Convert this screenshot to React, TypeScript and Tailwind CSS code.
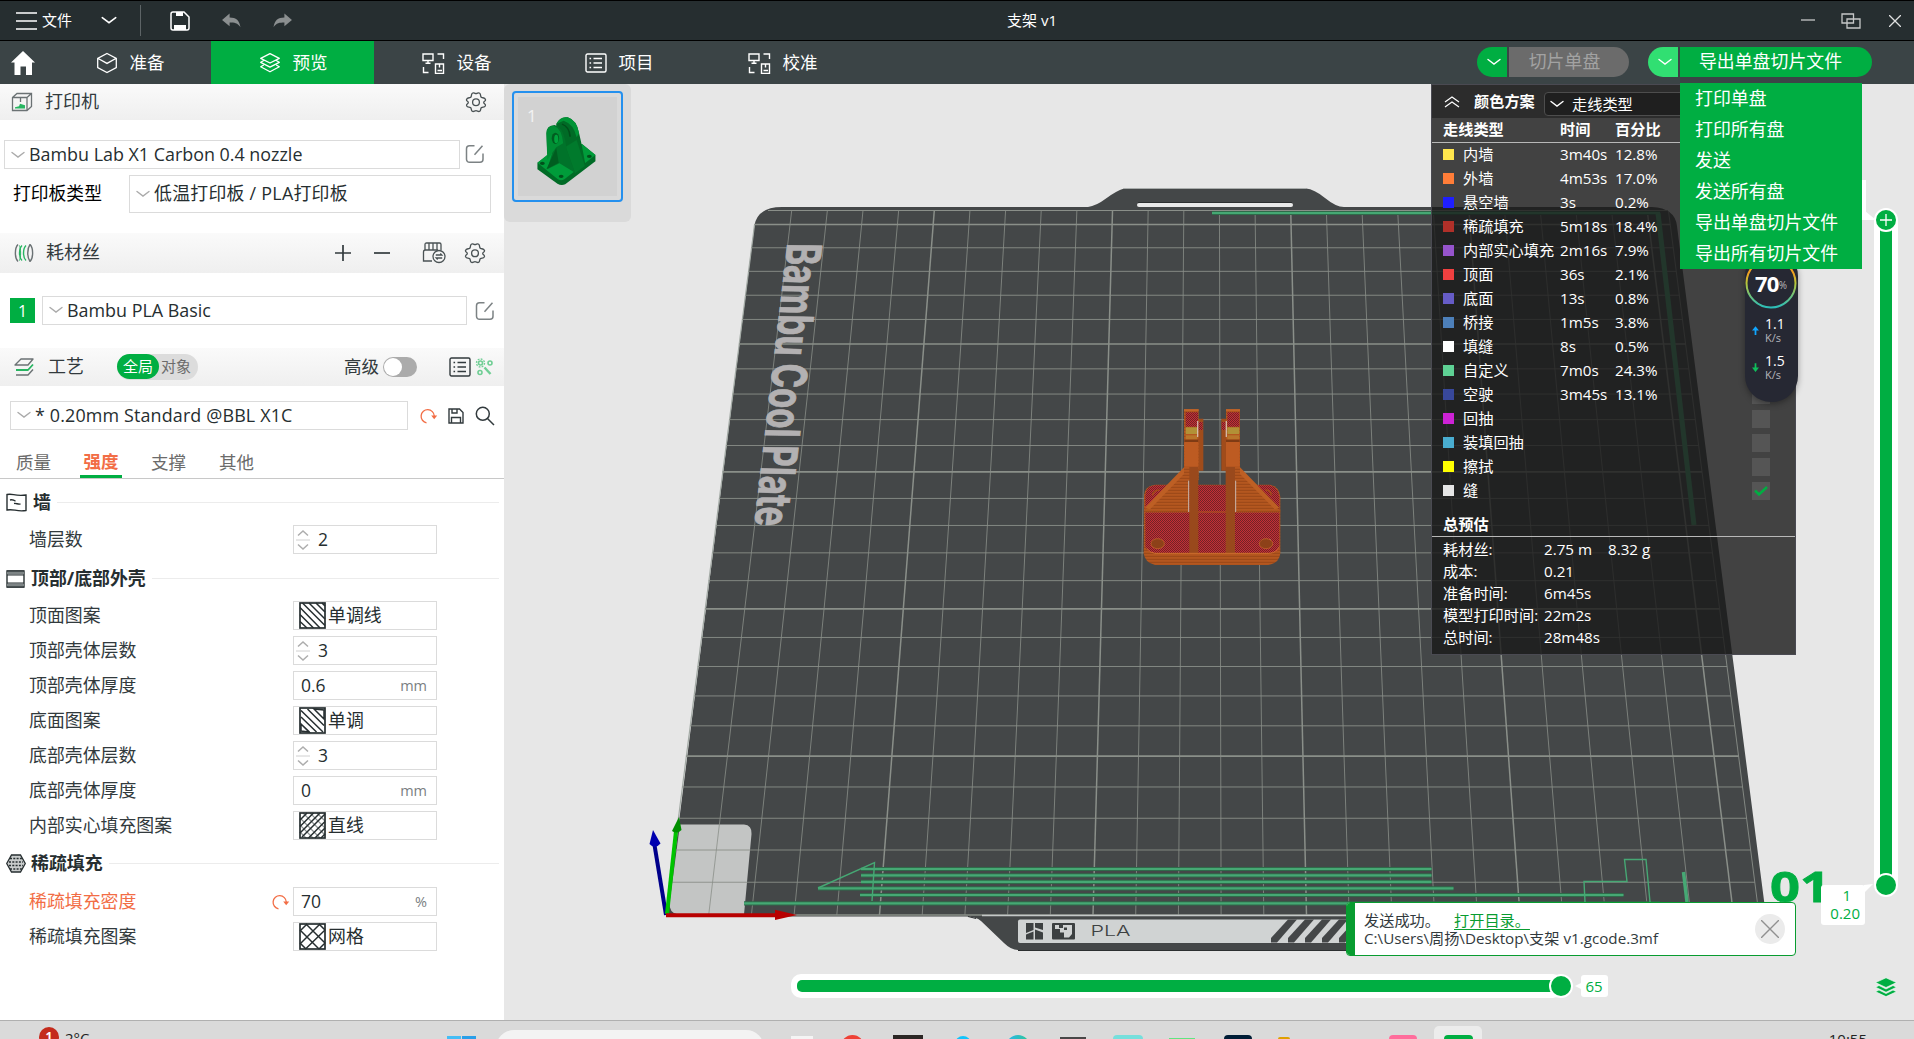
import React from "react";

const FONT = "font-['HarmonyOS_Sans_SC','Open_Sans','Noto_Sans_CJK_SC',sans-serif]";

type IconProps = { className?: string };

/* ---------- small icons ---------- */

function Chevron({ className = "" }: IconProps) {
  return (
    <svg viewBox="0 0 14 8" fill="none" stroke="currentColor" className={className}>
      <path d="M1 1.500 7 6l6-4.500" strokeWidth="1.400" strokeLinecap="round" />
    </svg>
  );
}

function Gear() {
  return (
    <svg viewBox="0 0 22 22" fill="none" stroke="#4a5254" strokeWidth="1.300" className="h-[22px] w-[22px]">
      <path d="M7.200 2.400C8.600 0.800 9.400 2.600 11 2.600s2.400-1.800 3.800-.2c1.400 1.600.2 3 1.700 4 1.700.6 3.300.2 4 2 .5 2-1.800 1.700-1.800 3.100s2.300 1.300 1.700 3.300c-.9 1.800-2.400 1-3.900 1.800-1.300 1-.3 2.400-1.700 3.600-1.600 1-2.300-.6-3.800-.6s-2.200 1.600-3.800.6c-1.400-1.200-.4-2.600-1.700-3.600C4 15.800 2.500 16.600 1.600 14.800c-.6-2 1.700-1.900 1.700-3.300S1 10.400 1.500 8.400c.7-1.800 2.300-1.400 4-2 1.500-1 .3-2.400 1.700-4Z" />
      <circle cx="11" cy="11.300" r="3.400" />
    </svg>
  );
}

function EditIcon() {
  return (
    <svg viewBox="0 0 20 20" fill="none" stroke="#7c8284" strokeWidth="1.500" className="h-5 w-5">
      <path d="M9.500 1.800H4.500a3 3 0 0 0-3 3v10.500a3 3 0 0 0 3 3h10.500a3 3 0 0 0 3-3V9.500" />
      <path d="M9.500 10.700 17.500 1.800" />
    </svg>
  );
}

function ListIcon({ stroke = "#fff" }: { stroke?: string }) {
  return (
    <svg viewBox="0 0 22 20" fill="none" stroke={stroke} strokeWidth="1.400" className="h-5 w-[22px]">
      <rect x="1" y="1" width="20" height="18" rx="1.500" />
      <path d="M8.500 5.500h8.500M8.500 10h8.500M8.500 14.500h8.500M4.500 5.500h1.600M4.500 10h1.600M4.500 14.500h1.600" />
    </svg>
  );
}

function DeviceIcon() {
  return (
    <svg viewBox="0 0 24 22" fill="none" stroke="#fff" strokeWidth="1.400" className="h-[22px] w-6">
      <path d="M2 2h10v6.500H2ZM7 8.500v2.500M4.500 11.200h5M16.500 2h6v5M2.500 15v5.500h5M14.500 12h8v9.500h-8ZM18.500 12v3.500M16.500 18.500h4.500" />
    </svg>
  );
}

function CubeIcon() {
  return (
    <svg viewBox="0 0 22 22" fill="none" stroke="#fff" strokeWidth="1.300" className="h-[22px] w-[22px]">
      <path d="M11 1.500 20.300 6.300v9.400L11 20.500 1.700 15.700V6.300ZM1.700 6.300 11 11.400l9.300-5.100" />
    </svg>
  );
}

function LayersIcon() {
  return (
    <svg viewBox="0 0 22 22" fill="none" stroke="#fff" strokeWidth="1.300" strokeLinejoin="round" className="h-[22px] w-[22px]">
      <path d="M11 1.700 20.300 6.300 11 11 1.700 6.300ZM4.800 8.500 1.700 10.300 11 15.200l9.300-4.900-3.100-1.800M4.800 13 1.700 14.800 11 19.800l9.300-5-3.100-1.800" />
    </svg>
  );
}

function UndoIcon({ className = "" }: IconProps) {
  return (
    <svg viewBox="0 0 22 18" className={className}>
      <path d="M9 1.500v4.200c7 0 10.500 3 11.500 10.500-3-4.500-6.500-5-11.500-5v4L1 8.500Z" fill="#8b8f90" />
    </svg>
  );
}

function ResetIcon({ className = "" }: IconProps) {
  return (
    <svg viewBox="0 0 18 16" fill="none" className={className}>
      <path d="M6.500 14.800A6.600 6.600 0 1 1 14.300 8" stroke="#f26d45" strokeWidth="1.300" />
      <path d="M11.200 7.500h6l-3 3.700Z" fill="#f26d45" />
    </svg>
  );
}

/* ---------- left panel ---------- */

function SectionBar({ icon, title, className, children }: { icon: React.ReactNode; title: string; className: string; children?: React.ReactNode }) {
  return (
    <div className={`flex shrink-0 items-center bg-gradient-to-b from-[#fafafa] to-[#efefef] ${className}`}>
      {icon}
      <span className="text-[18px] text-[#323a3d]">{title}</span>
      {children}
    </div>
  );
}

function Select({ children, className = "" }: { children: React.ReactNode; className?: string }) {
  return (
    <div className={`flex items-center border border-[#dbdbdb] bg-white text-[17.900px] text-[#262e30] ${className}`}>
      <Chevron className="h-2 w-[14px] shrink-0 text-[#ababab]" />
      <span className="ml-[4px] whitespace-nowrap">{children}</span>
    </div>
  );
}

function Spin() {
  return (
    <svg viewBox="0 0 14 22" fill="none" stroke="#adadad" className="h-[22px] w-[14px]">
      <path d="M2 6.500 7 2l5 4.500M2 15.500 7 20l5-4.500" strokeWidth="1.500" />
      <path d="M0 11h14" stroke="#d0d0d0" />
    </svg>
  );
}

const HATCH: Record<string, string> = {
  monoLine: "M1 19.500 8 26M1 12.500 14.500 26M1 5.500 21 26M3.500 1 26 23.500M10 1 26 17M17 1 26 10M23 1 26 4",
  mono: "M2 17 10.500 25M2 10 17.500 25M2 3.500 24 25M8.500 2 25 18.500M15 2 25 12M2 24V17l8 8ZM25 3v9L15 2Z",
  rect: "M1 8 8 1M1 14.500 14.500 1M1 21 21 1M3 25 26 2M9.500 26 26 9.500M16 26 26 16M22 26 26 22",
  grid: "M1 8 8 1M1 21 21 1M6.500 26 26 7M20 26 26 20M1 20 7 26M1 7 20 26M7 1 26 20M20 1 26 7",
};

function Hatch({ kind }: { kind: string }) {
  return (
    <svg viewBox="0 0 27 27" fill="none" stroke="#262e30" className="ml-[5px] h-[27px] w-[27px]">
      {kind === "rect" && <path d="M1 20 7 26M1 13 14 26M1 6 21 26M4 1 26 23M11 1 26 16M18 1 26 9" stroke="#8d9394" strokeWidth="1.200" />}
      <path d={HATCH[kind]} strokeWidth="1.500" />
      <rect x="1" y="1" width="25" height="25" strokeWidth="1.700" />
    </svg>
  );
}

type Setting = { label: string; spin?: string; value?: string; unit?: string; hatch?: string; text?: string; changed?: boolean };

function SettingRow({ s }: { s: Setting }) {
  return (
    <div className="flex h-[35px] items-center pl-[29px]">
      <span className={`w-[241px] text-[17.900px] ${s.changed ? "text-[#f26d45]" : "text-[#323a3d]"}`}>{s.label}</span>
      <span className="w-[23px]">{s.changed && <ResetIcon className="ml-[2px] h-4 w-[18px]" />}</span>
      <div className="flex h-[29px] w-[144px] items-center border border-[#dbdbdb] text-[17.500px] text-[#262e30]">
        {s.spin && (
          <>
            <span className="ml-[2px]"><Spin /></span>
            <span className="ml-[8px]">{s.spin}</span>
          </>
        )}
        {s.value && <span className="ml-[7px]">{s.value}</span>}
        {s.hatch && (
          <>
            <Hatch kind={s.hatch} />
            <span className="ml-[2px] text-[17.900px]">{s.text}</span>
          </>
        )}
        {s.unit && <span className="ml-auto mr-[9px] text-[14.500px] text-[#7a8082]">{s.unit}</span>}
      </div>
    </div>
  );
}

function GroupTitle({ icon, title, className }: { icon: React.ReactNode; title: string; className: string }) {
  return (
    <div className={`flex items-center pl-[6px] pr-[5px] ${className}`}>
      {icon}
      <span className="text-[17.900px] font-bold text-[#262e30]">{title}</span>
      <div className="ml-[6px] h-px flex-1 bg-[#ececec]" />
    </div>
  );
}

const SHELL: Setting[] = [
  { label: "顶面图案", hatch: "monoLine", text: "单调线" },
  { label: "顶部壳体层数", spin: "3" },
  { label: "顶部壳体厚度", value: "0.6", unit: "mm" },
  { label: "底面图案", hatch: "mono", text: "单调" },
  { label: "底部壳体层数", spin: "3" },
  { label: "底部壳体厚度", value: "0", unit: "mm" },
  { label: "内部实心填充图案", hatch: "rect", text: "直线" },
];

const INFILL: Setting[] = [
  { label: "稀疏填充密度", value: "70", unit: "%", changed: true },
  { label: "稀疏填充图案", hatch: "grid", text: "网格" },
];

function Sidebar() {
  return (
    <aside className="flex w-[504px] shrink-0 flex-col bg-white">
      <SectionBar
        className="h-9 pb-px pl-[11px]"
        title="打印机"
        icon={
          <svg viewBox="0 0 22 20" fill="none" stroke="#6b7274" strokeWidth="1.300" className="mr-[12px] h-5 w-[22px]">
            <path d="M1.500 5.500 6 1.500h14.500v13L16 18.500H1.500ZM1.500 5.500h14.500v13M16 5.500l4.500-4M9.500 6v4" />
            <path d="M4 16.500h10v-3.300l-5-1.500-1 2.500-4 1Z" fill="#27b561" stroke="none" />
          </svg>
        }
      >
        <div className="ml-auto mr-[17px]"><Gear /></div>
      </SectionBar>
      <div className="mt-5 flex items-center pl-1">
        <Select className="h-[29px] w-[456px] pl-[6px]">Bambu Lab X1 Carbon 0.4 nozzle</Select>
        <div className="ml-[5px] pb-px"><EditIcon /></div>
      </div>
      <div className="mt-[6px] flex items-center pl-[13px]">
        <span className="w-[116px] pb-[2px] text-[17.800px] text-black">打印板类型</span>
        <Select className="h-[38px] w-[362px] pb-px pl-[6px] tracking-[0.25px]">低温打印板 / PLA打印板</Select>
      </div>

      <SectionBar
        className="mt-5 h-10 pb-px pl-[14px]"
        title="耗材丝"
        icon={
          <svg viewBox="0 0 20 20" fill="none" strokeWidth="1.400" className="mr-[12px] h-5 w-5">
            <path d="M4 1.500c-3.500 3.500-3.500 13.500 0 17M16 1.500c3.500 3.500 3.500 13.500 0 17M16 1.500c-3 4-3 13 0 17" stroke="#6b7274" />
            <path d="M8 2.500c-3.300 3-3.300 12 0 15M12 2.500c-3.300 3-3.300 12 0 15" stroke="#27b561" />
            <path d="M5.500 2.500c1.500 3 1.500 12 0 15" stroke="#27b561" strokeWidth="1" />
          </svg>
        }
      >
        <div className="ml-auto mr-[18px] flex items-center">
          <svg viewBox="0 0 16 16" stroke="#323a3d" strokeWidth="1.700" className="mr-[23px] h-4 w-4"><path d="M8 0v16M0 8h16" /></svg>
          <svg viewBox="0 0 16 16" stroke="#323a3d" strokeWidth="1.700" className="mr-[32px] h-4 w-4"><path d="M0 8h16" /></svg>
          <svg viewBox="0 0 24 22" fill="none" stroke="#4a5254" strokeWidth="1.300" className="mr-[18px] h-[22px] w-6">
            <path d="M3 8V2.500Q3 1 4.500 1h13Q19 1 19 2.500V8M7 1.500V8M11 1.500V8M15 1.500V8M10 19H1.500V10Q1.500 8 3.500 8H16" />
            <circle cx="17" cy="14.500" r="6" fill="#f6f6f6" />
            <path d="M13.800 13h6l-1.500-1.500M20.200 16h-6l1.500 1.500" />
          </svg>
          <Gear />
        </div>
      </SectionBar>
      <div className="mt-[23px] flex items-center pl-[10px]">
        <div className="flex h-[25px] w-[25px] items-center justify-center bg-[#00ae42] text-[16px] text-white">1</div>
        <Select className="ml-[7px] h-[29px] w-[425px] pb-px pl-[6px]">Bambu PLA Basic</Select>
        <div className="ml-[8px]"><EditIcon /></div>
      </div>

      <SectionBar
        className="mt-[23px] h-[38px] pb-px pl-[14px]"
        title="工艺"
        icon={
          <svg viewBox="0 0 20 18" fill="none" strokeWidth="1.400" strokeLinejoin="round" className="mr-[14px] h-[18px] w-5">
            <path d="M1 7 7 1h12l-5 6ZM2 17h12l5-5.500" stroke="#6b7274" />
            <path d="M2 12h12l5-5.500" stroke="#27b561" strokeWidth="1.800" />
          </svg>
        }
      >
        <div className="ml-[33px] flex h-[26px] w-[81px] items-center rounded-full bg-[#dcdcdc] text-[15px]">
          <span className="flex h-[25px] w-[42px] items-center justify-center rounded-full bg-[#00ae42] text-white">全局</span>
          <span className="ml-[2px] text-[#6b6b6b]">对象</span>
        </div>
        <span className="ml-[146px] text-[17.500px] text-[#323a3d]">高级</span>
        <div className="ml-[4px] flex h-5 w-[34px] items-center rounded-full bg-[#ababab] p-px">
          <div className="h-[18px] w-[18px] rounded-full bg-white" />
        </div>
        <div className="ml-[32px]"><ListIcon stroke="#323a3d" /></div>
        <svg viewBox="0 0 18 18" fill="none" stroke="#6fce94" strokeWidth="1.600" className="ml-[4px] h-[18px] w-[18px]">
          <circle cx="5.500" cy="5" r="2" /><circle cx="5.500" cy="5" r="4" strokeWidth="1.400" strokeDasharray="1.800 1.300" />
          <circle cx="15" cy="5" r="2" /><circle cx="5" cy="14.500" r="2" />
          <path d="m9.500 9.500 6 6.500" strokeWidth="2.400" />
        </svg>
      </SectionBar>
      <div className="mt-[15px] flex items-center pl-[10px]">
        <Select className="h-[29px] w-[398px] pb-px pl-[6px]"><span className="tracking-[0.15px]">* 0.20mm Standard @BBL X1C</span></Select>
        <ResetIcon className="ml-[12px] h-4 w-[18px]" />
        <svg viewBox="0 0 16 16" fill="none" stroke="#323a3d" strokeWidth="1.400" className="ml-[10px] h-4 w-4">
          <path d="M1 1h10.500L15 4.500V15H1ZM4 1v4h5V1M3.500 15V9.500h9V15" />
        </svg>
        <svg viewBox="0 0 20 20" fill="none" stroke="#323a3d" strokeWidth="1.500" className="ml-[11px] h-5 w-5">
          <circle cx="7.800" cy="7.800" r="6.500" /><path d="m12.500 12.500 6.500 6.500" />
        </svg>
      </div>
      <div className="mt-[15px] flex h-[34px] border-b border-[#c8c8c8] pl-[16px] text-[17.500px] leading-[30px] text-[#6b6b6b]">
        <span className="mr-[22px] w-[42px] pt-[2px]">质量</span>
        <span className="mr-[26px] w-[42px] border-b-[3px] border-[#00ae42] pt-[2px] text-center font-bold leading-[28px] text-[#f26d45]">强度</span>
        <span className="mr-[26px] w-[42px] pl-[3px] pt-[2px]">支撑</span>
        <span className="w-[42px] pl-[3px] pt-[2px]">其他</span>
      </div>

      <GroupTitle
        className="h-[43px] pt-[3px]"
        title="墙"
        icon={
          <svg viewBox="0 0 21 19" fill="none" stroke="#262e30" strokeWidth="1.400" className="mr-[6px] h-[19px] w-[21px]">
            <path d="M1 1.500c6-1.500 7 2 19 .5v15.500c-10 1.500-12-2-19-.5ZM4 7c3-1 3 .5 5.500 1M8 10.500c2.500-.5 3.500 1 6.500.5" />
          </svg>
        }
      />
      <SettingRow s={{ label: "墙层数", spin: "2" }} />
      <GroupTitle
        className="h-[41px] pt-[2px]"
        title="顶部/底部外壳"
        icon={
          <svg viewBox="0 0 19 18" fill="none" stroke="#262e30" strokeWidth="1.400" className="mr-[6px] h-[18px] w-[19px]">
            <path d="M1 1h17v16H1Z" /><path d="M1 3h17M1 15h17" stroke="#7d8485" strokeWidth="3" /><path d="M1 5h17M1 13h17M1 1h17M1 17h17" strokeWidth="1.200" />
          </svg>
        }
      />
      {SHELL.map((s) => <SettingRow key={s.label} s={s} />)}
      <GroupTitle
        className="h-[41px]"
        title="稀疏填充"
        icon={
          <svg viewBox="0 0 20 19" fill="none" stroke="#262e30" strokeWidth="1.300" className="mr-[5px] h-[19px] w-5">
            <path d="M5.500 1h9L19.300 9.500 14.500 18h-9L.7 9.500Z" fill="#c9cccc" />
            <path d="M4 4.500h12M3 8h14M3 11.500h14M4 15h12" strokeDasharray="2 1.300" strokeWidth="1.500" />
          </svg>
        }
      />
      {INFILL.map((s) => <SettingRow key={s.label} s={s} />)}
    </aside>
  );
}

/* ---------- 3D scene ---------- */

/* Screen height of the n-th 10 mm grid row, counted from the back of the plate. */
const rowY = (n: number) => (224.5 + 21.653 * n) / (1 - 0.006521 * n);
const leftX = (y: number) => 756 - (90 * (y - 211)) / 704;
const rightX = (y: number) => 1668.5 + (90.5 * (y - 211)) / 704;

function Scene() {
  const rows = Array.from({ length: 26 }, (_, n) => n);
  return (
    <svg viewBox="504 84 1410 936" className="absolute inset-0 h-full w-full">
      <defs>
        <pattern id="weave" width="6" height="6" patternUnits="userSpaceOnUse">
          <rect width="6" height="6" fill="#c42f36" />
          <path d="M0 1.500h3M3 4.500h3" stroke="#5e2022" strokeWidth="2.400" />
        </pattern>
        <pattern id="layers" width="9" height="9" patternUnits="userSpaceOnUse">
          <rect width="9" height="9" fill="#b4571f" />
          <path d="M0 7h9" stroke="#9a4717" strokeWidth="3" />
        </pattern>
        <filter id="soft"><feGaussianBlur stdDeviation="0.700" /></filter>
      </defs>

      {/* plate */}
      <path d="M754.500 225Q758 207 782 207H1088Q1096 206 1106 198.500T1124 188.500H1306Q1314 189 1325 198T1344 207H1652Q1675 208 1677 226L1766 916H1454L1410 950H1018Q1011 950 1004 943L981 921Q976 916.500 966 916.500H667Z" fill="#444748" />
      <path d="M754.500 225 666 915" stroke="#a3aaa5" strokeWidth="1.200" fill="none" />
      <path d="M1124 188.500H1306" stroke="#a9adac" strokeWidth="1" />
      <rect x="1137" y="203" width="156" height="4" rx="2" fill="#e9e9e9" />
      <path d="M1138 202.500h154" stroke="#2c2f30" />
      <path d="M1018 950.500H1400M968 916.500l8 2" stroke="#2c2f30" fill="none" />

      {/* parking pad */}
      <path d="M680 824.500H744Q752 825 751.500 834L744 914.500H678Q669 913 669.500 903Z" fill="#c3c5c4" />

      {/* grid */}
      <path d="M768 210.500H1668" stroke="#8a8f89" strokeWidth="1" />
      {rows.map((n) => {
        const y = rowY(n);
        return <line key={`r${n}`} x1={leftX(y)} x2={rightX(y)} y1={y} y2={y} stroke="#8a8f89" strokeWidth={n % 5 === 0 ? 1.7 : 0.9} />;
      })}
      {rows.slice(1).map((m) => (
        <line key={`c${m}`} x1={756 + 35.65 * m} y1="211" x2={666 + 42.7 * m} y2="915" stroke="#8a8f89" strokeWidth={m % 5 === 0 ? 1.5 : 0.8} />
      ))}
      <line x1="1668.500" y1="211" x2="1759" y2="915" stroke="#8a8f89" strokeWidth="0.900" />
      <path d="M982 915.500H1454" stroke="#c4c8c7" strokeWidth="1.500" />

      {/* plate name */}
      <text transform="matrix(-0.117 1 -1 -0.02 787 247)" x="-4" y="0" fontSize="48" textLength="283" lengthAdjust="spacingAndGlyphs" fill="#b3b1b2" stroke="#b3b1b2" strokeWidth="0.800" fontFamily="Inter, sans-serif" fontWeight="700">Bambu Cool Plate</text>

      {/* front label */}
      <rect x="1018" y="919.500" width="400" height="23.500" rx="2" fill="#d0d3d3" />
      <g fill="#3c4041">
        <path d="M1026 923h7.500v7l-7.500 3ZM1026 934.500l7.500-3v8h-7.500ZM1035 923h8v7l-8-2.500ZM1035 929.500l8 3v7h-8Z" />
        <rect x="1052" y="923" width="23" height="16.500" rx="1" />
      </g>
      <path d="M1055 925h4v3h4v-3h9v9l-3 3.500h-5v-5h-4v-3.500h-5Z" fill="#d0d3d3" /><path d="M1064 927.500h3v2.500h-3Z" fill="#3c4041" />
      <text x="1090.500" y="936" fontSize="14" textLength="40" lengthAdjust="spacingAndGlyphs" fill="#3c4041" fontFamily="Inter, sans-serif" fontWeight="300">PLA</text>
      {[0, 17, 34, 51, 68].map((d) => (
        <path key={d} transform={`translate(${d} 0)`} d="M1271 942.500V938L1288 919.500H1297L1277 942.500Z" fill="#444748" />
      ))}

      {/* travel and purge lines */}
      <g stroke="#2f6b4a" strokeWidth="4.200">
        <path d="M861 869H1431.500M861 875.400H1431.500M861 881.800H1431.500M818 888.300H1453.500M860 895H1623.500M744 903.300H1660M1212 213H1660" />
      </g>
      <g stroke="#46a874" strokeWidth="2.200" fill="none">
        <path d="M861 869H1431.500M861 875.400H1431.500M861 881.800H1431.500M818 888.300H1453.500M860 895H1623.500M744 903.300H1660M1212 213H1660" />
        <path d="M818 888 874.500 862.500 872 901M1585 902 1584 881.500H1627L1624.500 859.500H1646L1650 902" strokeWidth="1.400" />
        <path d="M1683.500 872 1687 902" strokeWidth="3.500" />
        <path d="M1658 213 1694 525" strokeWidth="5" />
      </g>

      {/* origin axes */}
      <path d="M666 915 654.500 845" stroke="#00008b" strokeWidth="4" />
      <path d="M653 830 660.500 843.500Q655 850 649.500 844Z" fill="#0000b0" />
      <path d="M667 914 676 831" stroke="#00c400" strokeWidth="4" />
      <path d="M679 817 681.500 830Q677 834.500 672 831Z" fill="#008f00" />
      <path d="M666 915.200H776" stroke="#b80000" strokeWidth="4" />
      <path d="M797 915 775 909.700V920Z" fill="#b80000" />

      {/* sliced model, drawn on a 3x canvas */}
      <g transform="translate(1100 380) scale(.33333)">
        <path d="M132 345Q134 318 165 314H510Q538 320 541 350V520Q538 550 505 555H165Q134 548 131 520Z" fill="url(#layers)" />
        <path d="M136 345Q138 320 165 316H510Q534 322 538 350V505Q532 518 510 519H160Q140 514 136 500Z" fill="url(#weave)" />
        <path d="M136 396H538" stroke="#b4571f" strokeWidth="3" />
        <path d="M132 392 252 266H268V396H132Z" fill="url(#layers)" />
        <path d="M541 392 420 266H404V396H541Z" fill="url(#layers)" />
        <path d="M134 384 252 262V282L150 388ZM539 384 420 262V282L524 388Z" fill="#bd5f24" />
        <path d="M294 116H310V272H294ZM364 116H378V272H364Z" fill="#a04c1b" />
        <path d="M252 88H296V300H268L252 266ZM378 88H420V266L404 300H378Z" fill="url(#layers)" />
        <path d="M268 250H295V520H268ZM377 250H405V520H377Z" fill="#99491c" />
        <path d="M253 185H295V260H253ZM378 185H419V260H378Z" fill="#bd5b22" />
        <path d="M257 97H294V140H257ZM382 97H418V140H382ZM295 126H308V150H295ZM365 126H377V150H365Z" fill="url(#weave)" />
        <path d="M257 142H292V162H257ZM382 142H418V162H382Z" fill="#b29136" />
        <path d="M257 166H292V178H257ZM382 166H418V178H382Z" fill="#b9762b" />
        <path d="M252 90H296M378 90H420" stroke="#c8692b" strokeWidth="4" />
        <path d="M253 183H295M378 183H419" stroke="#6d3312" strokeWidth="4" />
        <path d="M293 124V172M379 124V172" stroke="#e4d9d3" strokeWidth="4" strokeDasharray="4 2" />
        <path d="M266 302V396M407 302V396M510 478V502" stroke="#c9b6ae" strokeWidth="3" />
        <ellipse cx="173" cy="491" rx="20" ry="15" fill="#8d4119" stroke="#c8692b" strokeWidth="2" />
        <ellipse cx="498" cy="491" rx="20" ry="15" fill="#8d4119" stroke="#c8692b" strokeWidth="2" />
        <path d="M158 346Q160 330 178 330M514 346Q512 330 496 330" stroke="#a34b19" strokeWidth="5" fill="none" />
        <path d="M140 505Q150 519 165 520H508Q530 518 538 500" stroke="#cf6f2e" strokeWidth="3" fill="none" />
      </g>

      <text x="1770" y="901.500" fontSize="41" textLength="60" lengthAdjust="spacingAndGlyphs" fill="#00ae42" stroke="#00ae42" strokeWidth="0.800" fontFamily="Open Sans, sans-serif" fontWeight="700" filter="url(#soft)">01</text>
    </svg>
  );
}

function PlateThumb() {
  return (
    <div className="absolute left-0 top-0 h-[138px] w-[127px] rounded-md bg-[#dadada] pl-2 pt-[7px]">
      <div className="relative h-[111px] w-[111px] rounded-[4px] border-2 border-[#2490ee] p-[4px]">
        <div className="h-full w-full bg-[#d2d2d2]" />
        <span className="absolute left-[13px] top-[11px] text-[17px] leading-[24px] text-[#f2f2f2]">1</span>
        <svg viewBox="1310 345 155 215" preserveAspectRatio="none" className="absolute left-[21px] top-[22px] h-[71.700px] w-[63.300px]">
          <path d="M1316 488 1375 435 1425 432 1458 465V484L1384 553Q1374 558 1365 551L1316 508Z" fill="#006b26" />
          <path d="M1316 488 1375 430 1425 432 1458 465 1382 538Q1374 544 1366 538Z" fill="#009c3a" />
          <path d="M1362 372Q1372 348 1390 352 1412 360 1418 400L1424 432 1434 497 1406 516 1362 450Z" fill="#006b26" />
          <path d="M1362 372Q1372 348 1390 352 1412 360 1418 400L1412 412Q1405 372 1380 362Z" fill="#009436" />
          <path d="M1385 440 1408 520 1432 498 1412 420Z" fill="#007a2c" />
          <path d="M1338 400Q1338 376 1358 375 1376 380 1384 420L1388 450 1408 518 1370 490 1340 508 1352 460 1340 462Z" fill="#00732a" />
          <path d="M1338 400Q1338 378 1356 377 1376 386 1379 430L1362 442 1340 480Z" fill="#008e34" />
          <path d="M1338 508 1362 444 1368 488Z" fill="#005d20" />
          <ellipse cx="1360" cy="415" rx="9" ry="17" fill="#005d20" /><ellipse cx="1362" cy="417" rx="5" ry="13" fill="#00a33d" />
          <path d="M1376 372Q1394 380 1396 410" stroke="#004f1b" strokeWidth="4" fill="none" />
          <g fill="#00501b"><ellipse cx="1328" cy="490" rx="6" ry="5" /><ellipse cx="1374" cy="529" rx="6" ry="5" /><ellipse cx="1443" cy="469" rx="6" ry="5" /></g>
        </svg>
      </div>
    </div>
  );
}

/* ---------- legend ---------- */

const LEGEND: [string, string, string, string][] = [
  ["bg-[#ffe64d]", "内墙", "3m40s", "12.8%"],
  ["bg-[#ff7d38]", "外墙", "4m53s", "17.0%"],
  ["bg-[#1f1fff]", "悬空墙", "3s", "0.2%"],
  ["bg-[#b03029]", "稀疏填充", "5m18s", "18.4%"],
  ["bg-[#9654cc]", "内部实心填充", "2m16s", "7.9%"],
  ["bg-[#f04040]", "顶面", "36s", "2.1%"],
  ["bg-[#665cc7]", "底面", "13s", "0.8%"],
  ["bg-[#4d80ba]", "桥接", "1m5s", "3.8%"],
  ["bg-white", "填缝", "8s", "0.5%"],
  ["bg-[#5ed194]", "自定义", "7m0s", "24.3%"],
  ["bg-[#38489b]", "空驶", "3m45s", "13.1%"],
  ["bg-[#cd22d6]", "回抽", "", ""],
  ["bg-[#49add0]", "装填回抽", "", ""],
  ["bg-[#ffff00]", "擦拭", "", ""],
  ["bg-[#e6e6e6]", "缝", "", ""],
];

const TOTALS: [string, string, string][] = [
  ["耗材丝:", "2.75 m", "8.32 g"],
  ["成本:", "0.21", ""],
  ["准备时间:", "6m45s", ""],
  ["模型打印时间:", "22m2s", ""],
  ["总时间:", "28m48s", ""],
];

function Legend() {
  return (
    <div className="absolute left-[927px] top-0 flex h-[571px] w-[365px] flex-col border border-[#4a4a52] bg-[rgba(25,25,25,0.8)] text-[15.200px] text-white">
      <div className="flex h-[33px] shrink-0 items-center bg-[#2c2c2c] pl-[12px]">
        <svg viewBox="0 0 16 12" fill="none" stroke="#fff" strokeWidth="1.200" className="h-3 w-4"><path d="m1 6 7-5 7 5M1 11l7-5 7 5" /></svg>
        <span className="ml-[14px] w-[70px] pb-px font-bold">颜色方案</span>
        <div className="mt-[5px] flex h-6 w-[200px] items-center rounded-[4px] border border-[#4d4d4d] bg-[#1f1f1f] pl-[5px]">
          <Chevron className="h-2 w-[14px]" />
          <span className="ml-[8px]">走线类型</span>
        </div>
      </div>
      <div className="flex h-[25px] shrink-0 items-center border-b border-[#b8b8b8] pb-[2px] pl-[11px] font-bold">
        <span className="w-[117px]">走线类型</span>
        <span className="w-[55px]">时间</span>
        <span>百分比</span>
      </div>
      <div className="pb-px">
        {LEGEND.map(([color, name, time, pct], i) => (
          <div key={name} className="flex h-6 items-center pl-[11px]">
            <span className={`mb-[2px] h-[11px] w-[11px] ${color}`} />
            <span className="ml-[9px] w-[97px] whitespace-nowrap pb-px">{name}</span>
            <span className="w-[55px] pb-px">{time}</span>
            <span className="w-[100px] pb-px">{pct}</span>
            <span className="ml-[37px] flex h-[18px] w-[18px] items-center justify-center bg-[#555]">
              {i === 14 && <svg viewBox="0 0 14 10" fill="none" stroke="#00ae42" strokeWidth="2.500" className="h-[10px] w-[14px]"><path d="m1 4.500 4 4L13 1" /></svg>}
            </span>
          </div>
        ))}
      </div>
      <div className="mt-[9px] flex h-[24px] items-center border-b border-[#b8b8b8] pb-px pl-[11px] font-bold">总预估</div>
      <div className="pt-px">
        {TOTALS.map(([k, a, b]) => (
          <div key={k} className="flex h-[22px] items-center pl-[11px]">
            <span className="w-[101px] whitespace-nowrap">{k}</span>
            <span className="w-16">{a}</span>
            <span>{b}</span>
          </div>
        ))}
      </div>
    </div>
  );
}

function NetWidget() {
  return (
    <div className="absolute left-[1241px] top-[166px] flex h-[152px] w-[53px] flex-col rounded-[26px] bg-[#262833] pt-[7px] text-white shadow-[0_2px_6px_rgba(0,0,0,0.35)]">
      <div className="relative flex h-[52px] w-[52px] items-center justify-center">
        <svg viewBox="0 0 52 52" fill="none" className="absolute inset-0">
          <defs><linearGradient id="ring" x1="0" y1="0" x2="0" y2="1"><stop offset="0.300" stopColor="#f0a020" /><stop offset="0.500" stopColor="#b9c63a" /><stop offset="1" stopColor="#2bbdb8" /></linearGradient></defs>
          <circle cx="26" cy="26" r="24.500" stroke="url(#ring)" strokeWidth="2" />
        </svg>
        <span className="text-[22px] font-bold tracking-[-0.800px]">70</span><span className="mt-[5px] text-[10px] text-[#bbb]">%</span>
      </div>
      <div className="mt-[7px] flex items-center gap-[6px] pl-[7px]">
        <svg viewBox="0 0 8 10" className="h-[9px] w-[7px]"><path d="M4 0 8 5H5v5H3V5H0Z" fill="#10a5ff" /></svg>
        <div className="w-[20px] text-[14px] leading-[15px]">1.1<div className="text-[11px] leading-[13px] text-[#b5b5bb]">K/s</div></div>
      </div>
      <div className="mt-[9px] flex items-center gap-[6px] pl-[7px]">
        <svg viewBox="0 0 8 10" className="h-[9px] w-[7px]"><path d="M4 10 8 5H5V0H3v5H0Z" fill="#0fbf5c" /></svg>
        <div className="w-[20px] text-[14px] leading-[15px]">1.5<div className="text-[11px] leading-[13px] text-[#b5b5bb]">K/s</div></div>
      </div>
    </div>
  );
}

function Sliders() {
  return (
    <>
      <div className="absolute left-[1358px] top-[96px] h-10 w-[4px] bg-white" />
      <svg viewBox="0 0 12 10" className="absolute left-[1361px] top-[127px] h-[10px] w-3"><path d="M0 0 11 9H0Z" fill="#fff" /></svg>
      <div className="absolute left-[1370px] top-[136px] flex h-[664px] w-6 justify-center bg-white">
        <div className="h-full w-3 bg-[#00ae42]" />
      </div>
      <div className="absolute left-[1370px] top-[124px] flex h-6 w-6 items-center justify-center rounded-full border-2 border-white bg-[#00ae42]">
        <svg viewBox="0 0 12 12" stroke="#fff" strokeWidth="1.300" className="h-3 w-3"><path d="M6 0v12M0 6h12" /></svg>
      </div>
      <div className="absolute left-[1370px] top-[789px] h-6 w-6 rounded-full border-2 border-white bg-[#00ae42]" />
      <svg viewBox="0 0 10 12" className="absolute left-[1360px] top-[800px] h-3 w-[10px]"><path d="M0 1 9 0 0 9Z" fill="#fff" /></svg>
      <div className="absolute left-[1317px] top-[801px] h-10 w-11 rounded-[3px] bg-white pr-[5px] text-right text-[15px] leading-[18px] text-[#00ae42]">
        <div className="pr-[9px] pt-px">1</div>
        <div>0.20</div>
      </div>

      <div className="absolute left-[287px] top-[890px] flex h-6 w-[772px] items-center rounded-[10px] bg-white px-[6px]">
        <div className="h-3 w-full rounded-[5px] bg-[#00ae42]" />
      </div>
      <div className="absolute left-[1045px] top-[890px] h-6 w-6 rounded-full border-2 border-white bg-[#00ae42]" />
      <svg viewBox="0 0 8 8" className="absolute left-[1071px] top-[898px] h-2 w-2"><path d="M8 0v8L0 4Z" fill="#fff" /></svg>
      <div className="absolute left-[1077px] top-[891px] flex h-[22px] w-[27px] items-center justify-center rounded-[3px] bg-white pr-px text-[15px] text-[#00ae42]">65</div>
      <svg viewBox="0 0 22 20" className="absolute left-[1371px] top-[893px] h-5 w-[22px]" stroke="#fff" strokeWidth="0.600">
        <path d="M11 .8 21.500 5.600 11 10.500.5 5.600ZM4 8.500l7 3.500 7-3.500 3.500 1.700L11 15.200.5 10.200ZM4 13l7 3.500 7-3.500 3.500 1.700L11 19.600.5 14.700Z" fill="#00ae42" />
      </svg>
    </>
  );
}

function Toast() {
  return (
    <div className="absolute left-[842px] top-[818px] flex h-[54px] w-[450px] items-center overflow-hidden rounded-[4px] border border-[#089c30] bg-white text-[15.200px] leading-[18px] text-[#323a3d]">
      <div className="h-full w-2 bg-[#089c30]" />
      <div className="ml-[9px] whitespace-nowrap pb-px">
        <div className="flex"><span className="w-[90px]">发送成功。</span><span className="text-[#089c30] underline underline-offset-[3px]">打开目录。</span></div>
        <div>C:\Users\周扬\Desktop\支架 v1.gcode.3mf</div>
      </div>
      <div className="ml-auto mr-[10px] flex h-[30px] w-[30px] items-center justify-center rounded-full bg-[#ebebeb]">
        <svg viewBox="0 0 18 18" stroke="#909090" strokeWidth="1.400" className="h-[18px] w-[18px]"><path d="M0 0l18 18M18 0 0 18" /></svg>
      </div>
    </div>
  );
}

/* ---------- top bars ---------- */

function TitleBar() {
  return (
    <header className="flex h-[41px] shrink-0 items-center border-y border-black bg-[#262e30] text-white">
      <div className="flex w-[140px] items-center pl-4">
        <svg viewBox="0 0 21 18" stroke="#fff" strokeWidth="1.500" className="h-[18px] w-[21px]"><path d="M0 1h21M0 9h21M0 17h21" /></svg>
        <span className="ml-[5px] text-[15px]">文件</span>
        <Chevron className="ml-[29px] h-[9px] w-[16px]" />
      </div>
      <div className="h-[31px] w-px bg-[#5d6466]" />
      <svg viewBox="0 0 20 20" fill="none" stroke="#fff" strokeWidth="1.500" className="ml-[29px] h-5 w-5">
        <path d="M3 1h11l5 5v11a2 2 0 0 1-2 2H3a2 2 0 0 1-2-2V3a2 2 0 0 1 2-2Z" /><path d="M4 14h12v5H4ZM6 1h7v4H6Z" fill="#fff" stroke="none" />
      </svg>
      <UndoIcon className="ml-[31px] h-[17px] w-[21px]" />
      <UndoIcon className="ml-[30px] h-[17px] w-[21px] -scale-x-100" />
      <span className="ml-[714px] text-[15px]">支架 v1</span>
      <svg viewBox="0 0 14 14" stroke="#b0b3b3" strokeWidth="1.500" className="ml-auto h-[14px] w-[14px]"><path d="M0 6h14" /></svg>
      <svg viewBox="0 0 20 16" fill="none" stroke="#c6c8c8" strokeWidth="1.300" className="ml-[26px] h-4 w-5"><path d="M1 1h11.500v9H1ZM6 6h13v9H6Z" /></svg>
      <svg viewBox="0 0 12 12" stroke="#dfe0e0" strokeWidth="1.300" className="ml-[28px] mr-[13px] h-3 w-3"><path d="M0 0l12 12M12 0 0 12" /></svg>
    </header>
  );
}

function Tab({ icon, label, active }: { icon: React.ReactNode; label: string; active?: boolean }) {
  return (
    <div className={`flex h-full w-[163px] items-center justify-center gap-[12px] pl-px text-[17.500px] text-white ${active ? "bg-[#00ae42]" : ""}`}>
      {icon}
      <span className="pb-px">{label}</span>
    </div>
  );
}

const MENU = ["打印单盘", "打印所有盘", "发送", "发送所有盘", "导出单盘切片文件", "导出所有切片文件"];

function TabBar() {
  return (
    <nav className="relative z-20 flex h-[43px] shrink-0 items-center bg-[#3b4446]">
      <svg viewBox="0 0 24 24" className="ml-[11px] mr-[13px] h-6 w-6"><path d="M12 0 24 11.500h-3V24h-6v-8.500H9.500V24h-6V11.500H0Z" fill="#fff" /></svg>
      <Tab icon={<CubeIcon />} label="准备" />
      <Tab icon={<LayersIcon />} label="预览" active />
      <Tab icon={<DeviceIcon />} label="设备" />
      <Tab icon={<ListIcon />} label="项目" />
      <Tab icon={<DeviceIcon />} label="校准" />
      <div className="mb-[2px] ml-auto mr-[42px] flex h-[30px] text-[17.900px] text-white">
        <div className="flex w-[30px] items-center justify-center rounded-l-full bg-[#00ae42] pl-[4px]"><Chevron className="h-2 w-[14px]" /></div>
        <div className="ml-[2px] flex w-[120px] items-center justify-center rounded-r-full bg-[#6b6b6b] pr-[9px] text-[#a2a2a2]">切片单盘</div>
        <div className="ml-[19px] flex w-[30px] items-center justify-center rounded-l-full bg-[#31df72] pl-[4px]"><Chevron className="h-2 w-[14px]" /></div>
        <div className="ml-[2px] flex w-[192px] items-center justify-center rounded-r-full bg-[#00ae42] pr-[11px]">导出单盘切片文件</div>
      </div>
      <div className="absolute left-[1680px] top-[42px] w-[182px] bg-[#00ae42] pl-[15px] text-[17.900px] leading-[31px] text-white">
        {MENU.map((m) => <div key={m}>{m}</div>)}
      </div>
    </nav>
  );
}

/* ---------- taskbar ---------- */

const APPS = [
  "ml-[27px] mt-[15px] w-[22px] bg-[#f4f4f4]",
  "ml-[28px] mt-[14px] w-[23px] rounded-full bg-[#ee4136]",
  "ml-[29px] mt-[14px] w-[30px] bg-[#2b2624]",
  "ml-[32px] mt-[15px] w-[16px] rounded-full bg-[#12c4fb]",
  "ml-[35px] mt-[14px] w-[24px] rounded-full bg-gradient-to-r from-[#2fb4ee] to-[#33c690]",
  "ml-[30px] mt-[16px] w-[26px] bg-[#484848]",
  "ml-[27px] mt-[14px] w-[30px] rounded-[4px] bg-[#76dfdc]",
  "ml-[26px] mt-[17px] w-[26px] bg-[#5fe583]",
  "ml-[29px] mt-[14px] w-[28px] rounded-[4px] bg-[#001d36]",
  "ml-[26px] mt-[16px] w-[12px] rounded-[2px] bg-[#dfa000]",
  "ml-[99px] mt-[14px] w-[28px] rounded-[4px] bg-[#ff6d9c]",
];

function Taskbar() {
  return (
    <footer className="flex h-[19px] shrink-0 items-start overflow-hidden border-t border-[#b0b0b0] bg-[#dadada]">
      <div className="ml-[39px] mt-[6px] h-5 w-5 shrink-0 rounded-full bg-[#c42b1c] text-center text-[12px] font-bold leading-[19px] text-white">1</div>
      <div className="ml-[6px] mt-[9px] w-[382px] shrink-0 text-[15px] leading-[17px] text-[#222]">2°C</div>
      <div className="mt-[15px] flex w-[29px] shrink-0 gap-px"><div className="h-5 flex-1 bg-[#45bdf5]" /><div className="h-5 flex-1 bg-[#2a9fe8]" /></div>
      <div className="ml-[20px] mt-[9px] h-9 w-[268px] shrink-0 rounded-full bg-[#f3f3f3]" />
      {APPS.map((c) => <div key={c} className={`h-[26px] shrink-0 ${c}`} />)}
      <div className="ml-[17px] mt-[5px] flex h-10 w-[48px] shrink-0 justify-center rounded-[5px] bg-[#ececec] pt-[9px]"><div className="h-6 w-[29px] rounded-[4px] bg-[#00ae42]" /></div>
      <span className="ml-auto mr-[47px] mt-[9px] text-[15px] leading-[18px] text-[#222]">10:55</span>
    </footer>
  );
}

export default function App() {
  return (
    <div className={`flex h-[1039px] w-[1914px] flex-col overflow-hidden bg-[#e7e7e7] leading-normal ${FONT}`}>
      <TitleBar />
      <TabBar />
      <div className="flex h-[936px] shrink-0">
        <Sidebar />
        <main className="relative flex-1 overflow-hidden bg-[#e7e7e7]">
          <Scene />
          <PlateThumb />
          <Legend />
          <NetWidget />
          <Sliders />
          <Toast />
        </main>
      </div>
      <Taskbar />
    </div>
  );
}
